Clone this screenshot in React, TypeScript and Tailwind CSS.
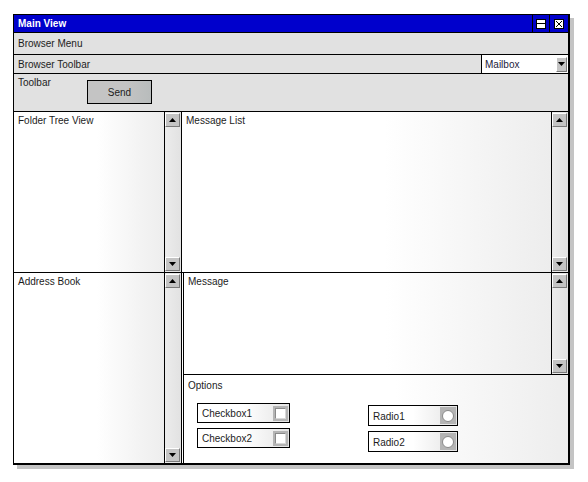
import React from "react";

const panelBg = "bg-[linear-gradient(to_right,#ffffff_55%,#ededed)]";

const Arrow = ({ down }: { down?: boolean }) => (
  <svg width="7" height="4" viewBox="0 0 7 4">
    <polygon points={down ? "0,0 7,0 3.5,4" : "0,4 7,4 3.5,0"} fill="#000" />
  </svg>
);

const ScrollButton = ({ down }: { down?: boolean }) => (
  <div className="w-[15px] h-[14px] bg-[#c4c4c4] border border-t-white border-l-white border-r-[#7a7a7a] border-b-[#7a7a7a] flex items-center justify-center">
    <Arrow down={down} />
  </div>
);

const ScrollColumn = () => (
  <div className="w-[17px] shrink-0 border-l border-black bg-[linear-gradient(to_right,#ececec,#e2e2e2)] flex flex-col justify-between py-[1px]">
    <ScrollButton />
    <ScrollButton down />
  </div>
);

const Pane = ({ label, className = "" }: { label: string; className?: string }) => (
  <div className={`flex ${className}`}>
    <div className={`flex-1 ${panelBg} pl-[4px] pt-[3px] leading-[12px]`}>{label}</div>
    <ScrollColumn />
  </div>
);

const CheckItem = ({ label }: { label: string }) => (
  <div className="h-[20px] border border-black bg-[linear-gradient(to_right,#ffffff_50%,#e4e4e4)] flex items-center justify-between pl-[4px] pr-[1px]">
    <span>{label}</span>
    <div className="w-[15px] h-[15px] bg-[#b4b4b4] p-[2px]">
      <div className="w-full h-full bg-white border border-t-[#8a8a8a] border-l-[#8a8a8a] border-r-[#d8d8d8] border-b-[#d8d8d8]" />
    </div>
  </div>
);

const RadioItem = ({ label }: { label: string }) => (
  <div className="h-[21px] border border-black bg-[linear-gradient(to_right,#ffffff_50%,#e4e4e4)] flex items-center justify-between pl-[4px] pr-[1px]">
    <span className="pt-[2px]">{label}</span>
    <div className="w-[16px] h-[17px] bg-[#b4b4b4] flex items-center justify-center">
      <div className="w-[12px] h-[12px] rounded-full bg-white border border-[#8a8a8a]" />
    </div>
  </div>
);

export default function App() {
  return (
    <div className="min-h-screen bg-white pt-[14px] pl-[13px] font-['Liberation_Sans',Arial,sans-serif] text-[10px] text-[#1c1c1c]">
      <div className="w-[557px] h-[451px] border border-black border-r-2 border-b-2 shadow-[4px_4px_0_#c4c4c4] flex flex-col bg-white">
        {/* Title bar */}
        <div className="h-[18px] shrink-0 bg-[#0000cc] border-b border-black flex items-stretch">
          <div className="flex-1 pl-[4px] flex items-center text-white font-bold">Main View</div>
          <div className="w-[17px] border-l border-black flex items-center justify-center">
            <div className="w-[10px] h-[10px] bg-white border border-black flex items-center">
              <div className="w-full h-[1px] bg-black" />
            </div>
          </div>
          <div className="w-[19px] border-l border-black flex items-center justify-center">
            <svg width="10" height="10" viewBox="0 0 10 10">
              <rect x="0.5" y="0.5" width="9" height="9" fill="#fff" stroke="#000" />
              <path d="M2 2L8 8M8 2L2 8" stroke="#000" strokeWidth="1" />
            </svg>
          </div>
        </div>

        {/* Browser menu */}
        <div className="h-[22px] shrink-0 bg-[#e1e1e1] border-b border-black flex items-center pl-[4px]">
          Browser Menu
        </div>

        {/* Browser toolbar */}
        <div className="h-[19px] shrink-0 bg-[#e1e1e1] border-b border-black flex items-stretch">
          <div className="flex-1 pl-[4px] flex items-center">Browser Toolbar</div>
          <div className="w-[87px] border-l border-black bg-white flex items-center justify-between pl-[3px] pr-[1px]">
            <span className="text-[#1c1c3c]">Mailbox</span>
            <div className="w-[11px] h-[15px] bg-[#c4c4c4] border border-t-white border-l-white border-r-[#7a7a7a] border-b-[#7a7a7a] flex items-center justify-center">
              <Arrow down />
            </div>
          </div>
        </div>

        {/* Toolbar */}
        <div className="h-[38px] shrink-0 bg-[#e1e1e1] border-b border-black flex items-start pl-[4px] pt-[3px]">
          <span className="w-[69px] leading-[12px]">Toolbar</span>
          <div className="mt-[3px] w-[65px] h-[24px] border border-black bg-[linear-gradient(to_right,#c4c4c4_60%,#b8bcbc)] flex items-center justify-center">
            Send
          </div>
        </div>

        {/* Lower area */}
        <div className="flex-1 flex min-h-0">
          <div className="w-[168px] shrink-0 border-r border-black flex flex-col">
            <Pane label="Folder Tree View" className="h-[161px] border-b border-black" />
            <Pane label="Address Book" className="flex-1" />
          </div>
          <div className="flex-1 flex flex-col">
            <Pane label="Message List" className="h-[161px] border-b border-black" />
            <div className="flex-1 ml-[1px] border-l border-black flex flex-col">
              <Pane label="Message" className="h-[102px] border-b border-black" />
              <div className={`flex-1 ${panelBg}`}>
                <div className="pl-[4px] pt-[5px] leading-[12px]">Options</div>
                <div className="flex mt-[11px]">
                  <div className="ml-[13px] w-[93px] flex flex-col gap-[5px]">
                    <CheckItem label="Checkbox1" />
                    <CheckItem label="Checkbox2" />
                  </div>
                  <div className="ml-[78px] mt-[2px] w-[90px] flex flex-col gap-[5px]">
                    <RadioItem label="Radio1" />
                    <RadioItem label="Radio2" />
                  </div>
                </div>
              </div>
            </div>
          </div>
        </div>
      </div>
    </div>
  );
}
